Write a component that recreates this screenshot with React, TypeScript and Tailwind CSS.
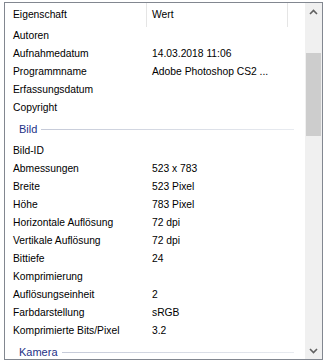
import { Fragment } from "react";

type Row = { name: string; value?: string };
type Group = { title?: string; rows: Row[] };

const GROUPS: Group[] = [
  {
    rows: [
      { name: "Autoren" },
      { name: "Aufnahmedatum", value: "14.03.2018 11:06" },
      { name: "Programmname", value: "Adobe Photoshop CS2 ..." },
      { name: "Erfassungsdatum" },
      { name: "Copyright" },
    ],
  },
  {
    title: "Bild",
    rows: [
      { name: "Bild-ID" },
      { name: "Abmessungen", value: "523 x 783" },
      { name: "Breite", value: "523 Pixel" },
      { name: "Höhe", value: "783 Pixel" },
      { name: "Horizontale Auflösung", value: "72 dpi" },
      { name: "Vertikale Auflösung", value: "72 dpi" },
      { name: "Bittiefe", value: "24" },
      { name: "Komprimierung" },
      { name: "Auflösungseinheit", value: "2" },
      { name: "Farbdarstellung", value: "sRGB" },
      { name: "Komprimierte Bits/Pixel", value: "3.2" },
    ],
  },
  { title: "Kamera", rows: [] },
];

function Chevron({ down }: { down?: boolean }) {
  return (
    <svg width="9" height="6" viewBox="0 0 9 6" className={down ? "rotate-180" : ""}>
      <path d="M1 5 L4.5 1.5 L8 5" fill="none" stroke="#606060" strokeWidth="1.6" />
    </svg>
  );
}

export default function App() {
  return (
    <div className="w-[329px] h-[364px] bg-white pl-[4px] pt-[2px] font-['Liberation_Sans',Arial,sans-serif] text-[10.3px] text-black">
      <div className="w-[319px] h-[358px] border border-[#828790] flex overflow-hidden">
        {/* list */}
        <div className="flex-1 min-w-0 flex flex-col overflow-hidden">
          <div className="h-[24px] shrink-0 flex items-center">
            <div className="w-[141px] pl-[8px]">Eigenschaft</div>
            <div className="w-px h-full bg-[#e5e5e5]" />
            <div className="w-[140px] pl-[5px]">Wert</div>
            <div className="w-px h-full bg-[#e5e5e5]" />
          </div>
          {GROUPS.map((g, gi) => (
            <Fragment key={gi}>
              {g.title && (
                <div className="h-[25px] shrink-0 flex items-center pl-[14px] pr-[11px] gap-[4px]">
                  <span className="text-[#1e3287] text-[11px]">{g.title}</span>
                  <div className="flex-1 h-px bg-gradient-to-r from-[#c5cad8] to-[#e8ebf0]" />
                </div>
              )}
              {g.rows.map((r) => (
                <div key={r.name} className="h-[18px] shrink-0 flex items-center">
                  <div className="w-[142px] pl-[8px] whitespace-nowrap">{r.name}</div>
                  <div className="pl-[5px] whitespace-nowrap">{r.value}</div>
                </div>
              ))}
            </Fragment>
          ))}
        </div>
        {/* scrollbar */}
        <div className="w-[17px] shrink-0 bg-[#f0f0f0] flex flex-col">
          <div className="h-[17px] flex items-center justify-center">
            <Chevron />
          </div>
          <div className="flex-1 flex flex-col px-[1px]">
            <div className="h-[33px]" />
            <div className="h-[83px] bg-[#cdcdcd]" />
          </div>
          <div className="h-[17px] flex items-center justify-center">
            <Chevron down />
          </div>
        </div>
      </div>
    </div>
  );
}
